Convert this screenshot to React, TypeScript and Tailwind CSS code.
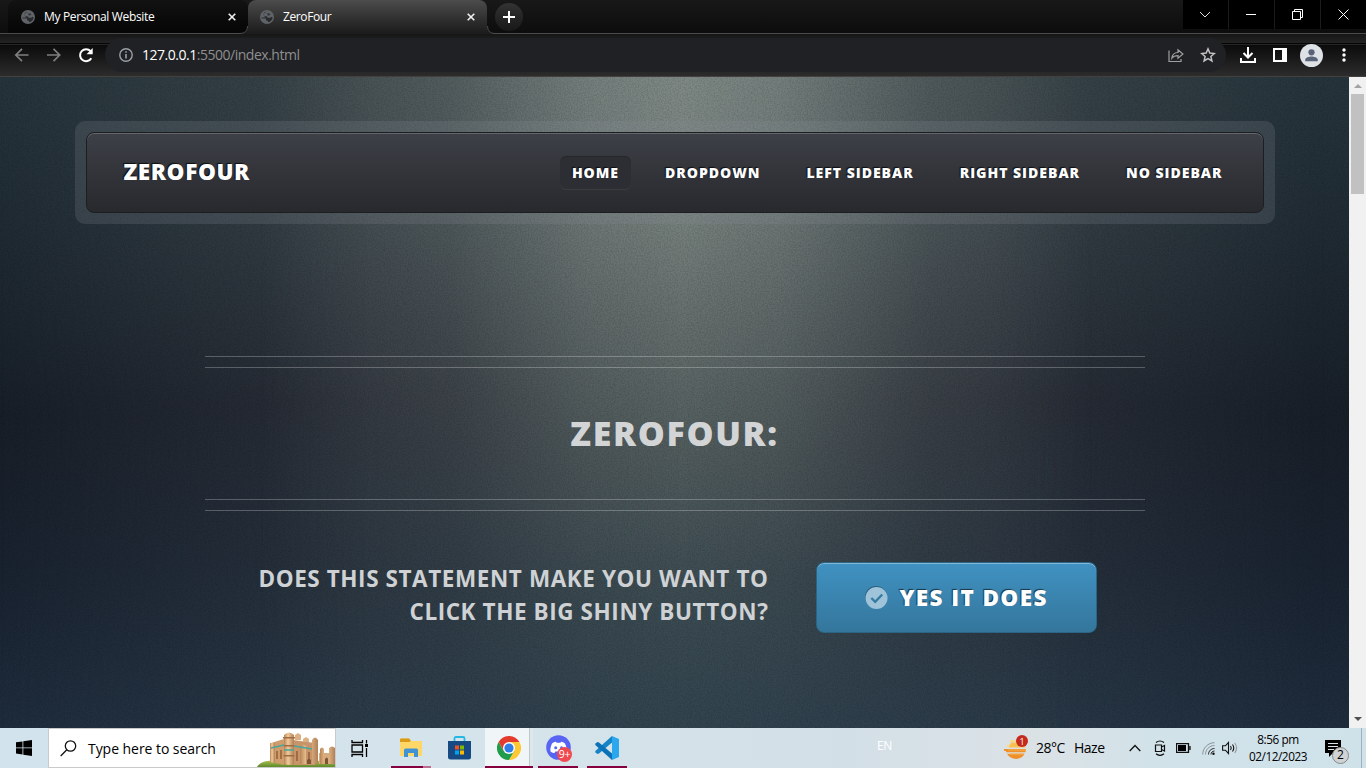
import React from "react";

const Globe = () => (
  <svg width="14" height="14" viewBox="0 0 14 14" className="shrink-0">
    <circle cx="7" cy="7" r="7" fill="#5f6368" />
    <path d="M6.600 1.400C4.500 1.800 3.400 3 3.400 4.400c0 1.300 1.100 1.700 2.600 1.800 1.200.1 1.500.6 1.600 1.600h2.200c.8 0 1.200-.4 1.700-1l1.100.6c-.3 2.300-1.900 4.300-4.300 4.900-.2-1.400-1-2-2.300-2.100V8.600H1.600L1.400 7.500h3.800c-.3-1-2-1.500-2-3.200" fill="#1b1b1b" opacity=".8" />
    <path d="M7 3.200h2.300L10.500 4.500 9.300 5.600H7.600z" fill="#1b1b1b" opacity=".6" />
  </svg>
);

const TabClose = () => (
  <svg width="8" height="8" viewBox="0 0 8 8" className="shrink-0">
    <path d="M.7.7l6.600 6.600M7.300.7L.7 7.300" stroke="#f1f1f1" strokeWidth="1.600" />
  </svg>
);

function TabStrip() {
  return (
    <div className="relative flex h-[34px] shrink-0 border-b border-[#4b4b4b] bg-gradient-to-b from-[#181818] to-[#0d0d0d]">
      <div className="ml-[8px] flex w-[240px] items-center rounded-t-lg bg-gradient-to-b from-[#121212] to-[#060606] pl-[13px]">
        <Globe />
        <span className="ml-[9px] w-[184px] whitespace-nowrap font-['Open_Sans',sans-serif] text-[12px] tracking-[-0.34px] text-white">My Personal Website</span>
        <TabClose />
      </div>
      <div className="relative -mb-px flex w-[239px] items-center rounded-t-lg bg-gradient-to-b from-[#4c4c4c] to-[#1b1b1b] pl-[12px]">
        <svg className="absolute bottom-0 -left-[8px]" width="8" height="8" viewBox="0 0 8 8">
          <path d="M0 7.500Q7.500 7.500 7.500 0H8V8H0z" fill="#1c1c1c" />
          <path d="M0 7.500Q7.500 7.500 7.500 0" fill="none" stroke="#4b4b4b" />
        </svg>
        <svg className="absolute -right-[8px] bottom-0" width="8" height="8" viewBox="0 0 8 8">
          <path d="M8 7.500Q.5 7.500 .5 0H0V8H8z" fill="#1c1c1c" />
          <path d="M8 7.500Q.5 7.500 .5 0" fill="none" stroke="#4b4b4b" />
        </svg>
        <Globe />
        <span className="ml-[9px] w-[184px] font-['Open_Sans',sans-serif] text-[12px] tracking-[-0.4px] text-white">ZeroFour</span>
        <TabClose />
      </div>
      <div className="mt-[3px] ml-[8px] flex h-[28px] w-[28px] items-center justify-center rounded-full bg-gradient-to-b from-[#333] to-[#181818]">
        <svg width="12" height="12" viewBox="0 0 12 12"><path d="M6 0v12M0 6h12" stroke="#fff" strokeWidth="2" /></svg>
      </div>
      <div className="ml-auto flex h-[29px] gap-px bg-[#1b1b1b]">
        <div className="flex w-[45px] items-center justify-center bg-black pr-px">
          <svg width="12" height="8" viewBox="0 0 12 8"><path d="M1 1l5 5 5-5" fill="none" stroke="#ddd" /></svg>
        </div>
        <div className="flex w-[45px] items-center justify-center bg-black pr-px"><div className="h-px w-[10px] bg-white" /></div>
        <div className="flex w-[45px] items-center justify-center bg-black pr-0">
          <svg width="11" height="11" viewBox="0 0 11 11" fill="none" stroke="#fff"><path d="M.5 2.500h8v8h-8zM2.500 2.500v-2h8v8h-2" /></svg>
        </div>
        <div className="flex w-[45px] items-center justify-center bg-black pr-0">
          <svg width="11" height="11" viewBox="0 0 11 11"><path d="M.5.5l10 10M10.500.5l-10 10" stroke="#fff" /></svg>
        </div>
      </div>
    </div>
  );
}

function Toolbar() {
  return (
    <div className="flex h-[43px] shrink-0 items-center border-b border-[#45403e] bg-[linear-gradient(#161616_0,#232323_9px,#050505_9px,#050505_10px,#252525_10px,#252525_11px,#0b0b0b_11px,#2c2c2c_42px)]">
      <svg className="ml-[14px]" width="16" height="16" viewBox="0 0 16 16" fill="none" stroke="#7f7f7f" strokeWidth="1.700"><path d="M14.500 8H2M8 1.800L1.800 8 8 14.200" /></svg>
      <svg className="ml-[16px]" width="16" height="16" viewBox="0 0 16 16" fill="none" stroke="#7f7f7f" strokeWidth="1.700"><path d="M1 8h12.500M7.500 1.800L13.700 8 7.500 14.200" /></svg>
      <svg className="ml-[16px]" width="16" height="16" viewBox="0 0 16 16"><path d="M13.300 11.200A6 6 0 1 1 12.600 4.200" fill="none" stroke="#fff" strokeWidth="2" /><path d="M14.700 1v6.200H8.500z" fill="#fff" /></svg>
      <div className="ml-[11px] flex h-[34px] w-[1121px] items-center rounded-full bg-[#202124] pl-[14px]">
        <svg width="14" height="14" viewBox="0 0 14 14" className="shrink-0"><circle cx="7" cy="7" r="6.200" fill="none" stroke="#9aa0a6" strokeWidth="1.400" /><path d="M7 6v4.500M7 3.300v1.500" stroke="#9aa0a6" strokeWidth="1.600" /></svg>
        <span className="ml-[9px] whitespace-nowrap pb-px font-['Open_Sans',sans-serif] text-[14px] tracking-[-0.48px] text-[#8f8f8f]"><span className="text-white">127.0.0.1</span>:5500/index.html</span>
        <svg className="mr-[16px] ml-auto shrink-0" width="16" height="16" viewBox="0 0 16 16" fill="none" stroke="#a0a0a0" strokeWidth="1.200"><path d="M1 3.500V14.500h12V12M3.800 11.200C4.200 7.500 6.200 5.600 10 5.500V2.700L14.900 7 10 11.200V8.600C7 8.600 5.200 9.300 3.800 11.200z" /></svg>
        <svg className="mr-[10px] shrink-0" width="16" height="16" viewBox="0 0 24 24" fill="none" stroke="#c4c4c4" strokeWidth="2.200"><path d="M12 2.800l2.700 6.300 6.800.6-5.200 4.500 1.600 6.700-5.900-3.600-5.900 3.600 1.600-6.700L2.500 9.700l6.800-.6z" /></svg>
      </div>
      <svg className="ml-[14px]" width="16" height="16" viewBox="0 0 16 16" fill="none" stroke="#fff" strokeWidth="2"><path d="M8 0v10M3.500 6L8 10.500 12.500 6M1 11v4h14v-4" /></svg>
      <svg className="ml-[17px]" width="14" height="14" viewBox="0 0 14 14"><path d="M0 0h14v14H0zM2 2v10h7V2z" fill="#fff" fillRule="evenodd" /></svg>
      <svg className="ml-[13px]" width="23" height="23" viewBox="0 0 22 22"><circle cx="11" cy="11" r="11" fill="#dee1e6" /><circle cx="11" cy="8" r="3" fill="#5a6478" /><path d="M5 16.500v-1.400c0-2.100 3.700-3.100 6-3.100s6 1 6 3.100v1.400z" fill="#5a6478" /></svg>
      <svg className="ml-[19px]" width="4" height="14" viewBox="0 0 4 14" fill="#fff"><circle cx="2" cy="2" r="1.700" /><circle cx="2" cy="7" r="1.700" /><circle cx="2" cy="12" r="1.700" /></svg>
    </div>
  );
}

const navText = "font-['Open_Sans',sans-serif] text-[14px] leading-[33px] font-extrabold tracking-[1px] whitespace-nowrap text-white [text-shadow:-1px_-1px_1px_rgba(0,0,0,0.75)]";

function Backdrop() {
  return (
    <>
      <div className="absolute inset-0 bg-[linear-gradient(to_bottom,#26353c_0%,#202c34_22%,#181f28_52%,#192330_75%,#1f2d3d_100%)]" />
      <div className="absolute inset-0 bg-[linear-gradient(to_bottom,#3b464a_0%,#384248_22%,#2b3039_50%,#29333e_75%,#2a3a48_100%)] [mask-image:linear-gradient(to_right,transparent,black_27%,black_73%,transparent_97%)]" />
      <div className="absolute inset-0 bg-[linear-gradient(to_bottom,#7f8a86_0%,#78827e_20%,#656f6d_38%,#515c5d_58%,#3e4d53_78%,#32444f_100%)] [mask-image:linear-gradient(to_right,transparent_19%,rgba(0,0,0,0.35)_33%,rgba(0,0,0,0.85)_43%,black_50%,rgba(0,0,0,0.85)_57%,rgba(0,0,0,0.3)_68%,transparent_80%)]" />
      <svg className="absolute inset-0 h-full w-full opacity-[0.1]">
        <filter id="grain">
          <feTurbulence type="fractalNoise" baseFrequency="0.7" numOctaves="2" seed="4" />
          <feColorMatrix values="0 0 0 0 0  0 0 0 0 0  0 0 0 0 0  3 0 0 0 -1.100" />
        </filter>
        <rect width="100%" height="100%" filter="url(#grain)" />
      </svg>
    </>
  );
}

const Rule = () => <div className="h-[12px] w-[940px] border-y border-[#ffffff40]" />;

function Page() {
  return (
    <div className="relative flex flex-1 overflow-hidden">
      <Backdrop />
      <div className="relative flex flex-1 flex-col items-center pt-[44px]">
        <div className="h-[103px] w-[1200px] rounded-[10px] bg-[#8b8f9734] p-[11px]">
          <div className="flex h-[81px] items-center rounded-lg border border-[#1d1e21] bg-gradient-to-b from-[#3d4047] to-[#28292d] pr-[28px] pl-[37px] shadow-[inset_0_1px_0_rgba(255,255,255,0.2)]">
            <span className="pb-px font-['Open_Sans',sans-serif] text-[22.500px] font-extrabold tracking-[0.6px] whitespace-nowrap text-white [text-shadow:-1px_-1px_1px_rgba(0,0,0,0.75)]">ZEROFOUR</span>
            <nav className="ml-auto flex gap-[22px]">
              <span className={navText + " rounded-md bg-[#2d2e33] px-[12px] shadow-[inset_0_1px_0_rgba(0,0,0,0.15),0_1px_0_rgba(255,255,255,0.06)]"}>HOME</span>
              <span className={navText + " px-[12px]"}>DROPDOWN</span>
              <span className={navText + " px-[12px]"}>LEFT SIDEBAR</span>
              <span className={navText + " px-[12px]"}>RIGHT SIDEBAR</span>
              <span className={navText + " px-[12px]"}>NO SIDEBAR</span>
            </nav>
          </div>
        </div>
        <div className="mt-[132px]"><Rule /></div>
        <h1 className="flex h-[131px] items-center font-['Open_Sans',sans-serif] text-[34px] font-extrabold tracking-[1.650px] whitespace-nowrap text-[#d2d4d5]">ZEROFOUR:</h1>
        <Rule />
        <div className="mt-[51px] flex w-[940px]">
          <p className="w-[564px] text-right font-['Open_Sans',sans-serif] text-[22.500px] leading-[33px] font-bold tracking-[0.580px] text-[#cfd2d4]">
            DOES THIS STATEMENT MAKE YOU WANT TO<br />CLICK THE BIG SHINY BUTTON?
          </p>
          <div className="ml-[47px] flex h-[71px] w-[281px] items-center rounded-lg border border-[#2c6484] bg-gradient-to-b from-[#4092c2] to-[#34769c] pl-[48px] shadow-[inset_0_1px_0_rgba(255,255,255,0.35)]">
            <svg width="23" height="23" viewBox="0 0 23 23" className="shrink-0"><circle cx="11" cy="11" r="11" fill="#28607f" /><circle cx="11.500" cy="12" r="11" fill="#9fc4d9" /><path d="M6.300 12l3.900 3.900 7-7.400" fill="none" stroke="#377ba2" strokeWidth="2.400" /></svg>
            <span className="ml-[12px] font-['Open_Sans',sans-serif] text-[22.500px] font-extrabold tracking-[1.400px] whitespace-nowrap text-white [text-shadow:-1px_-1px_1px_rgba(0,0,0,0.6)]">YES IT DOES</span>
          </div>
        </div>
      </div>
      <div className="relative flex w-[17px] flex-col items-center justify-between bg-[#f1f1f1] py-[7px]">
        <svg width="8" height="4" viewBox="0 0 8 4"><path d="M0 4l4-4 4 4z" fill="#a3a3a3" /></svg>
        <div className="mt-[6px] mb-auto h-[100px] w-[13px] bg-[#c1c1c1]" />
        <svg width="8" height="4" viewBox="0 0 8 4"><path d="M0 0l4 4 4-4z" fill="#505050" /></svg>
      </div>
    </div>
  );
}

const Castle = () => (
  <svg width="78" height="36" viewBox="0 0 78 36">
    <defs>
      <linearGradient id="stone" x1="0" x2="1"><stop offset="0" stopColor="#b98457" /><stop offset=".4" stopColor="#efcb9b" /><stop offset="1" stopColor="#b27e55" /></linearGradient>
      <linearGradient id="hill" x1="0" y1="0" x2="0" y2="1"><stop offset="0" stopColor="#a9bf52" /><stop offset="1" stopColor="#5f8a2b" /></linearGradient>
    </defs>
    <path d="M0 36C4 29 15 29 24 30s38-1 54 0v6z" fill="url(#hill)" />
    <path d="M14 12l13-4v26l-13-3z" fill="#cf9c6c" />
    <path d="M36 9l22 3v22H36z" fill="#c8956a" />
    <path d="M38 9V4l3-2 3 2v5zM46 11V8l3-2 3 2v3z" fill="#deb081" />
    <path d="M13 12h5v20l-5-1z" fill="url(#stone)" />
    <path d="M27 4q5-5 10 0v29q-5 2-10 0z" fill="url(#stone)" />
    <path d="M26 6h12v1.500H26zM26.500 14h11v1.500h-11zM26.500 24h11v1.500h-11z" fill="#a06c45" />
    <path d="M43 15q3-3 6 0v18h-6zM55 9q3-5 6 0v24h-6z" fill="url(#stone)" />
    <path d="M62 22h16v11H62z" fill="#d8ab7d" />
    <path d="M63 18q2-3 4 0v15h-4zM72 17q3-3 6 0v16h-6z" fill="url(#stone)" />
    <path d="M14 17l13-3M37 15l18 3M27 19h10" stroke="#48a79c" strokeWidth="1.300" fill="none" />
    <path d="M20 20v8M24 19v9M40 20v10M52 21v9" stroke="#95623d" strokeWidth="1.600" />
    <path d="M68 33v-5q2-3 3 0v5zM50 33v-4q2-2 4 0v4z" fill="#7f5334" />
  </svg>
);

const segoe = "font-['Open_Sans',sans-serif] whitespace-nowrap text-black";

function Taskbar() {
  return (
    <div className="flex h-[40px] shrink-0 items-center bg-[linear-gradient(to_right,#d3e3ed,#d5e4eb_35%,#d3dfe7_62%,#dbe2e6_76%,#d1e2e9_85%,#cfe2ea)]">
      <svg className="ml-[16px]" width="16" height="16" viewBox="0 0 16 16"><path d="M0 2.300l6.500-.9v6.100H0zM7.300 1.300L16 0v7.500H7.300zM0 8.300h6.500v6.200L0 13.600zM7.300 8.300H16V16l-8.700-1.300z" /></svg>
      <div className="ml-[16px] flex h-[40px] w-[288px] items-center border border-[#c8cacc] bg-white pl-[11px]">
        <svg width="17" height="17" viewBox="0 0 17 17" fill="none" stroke="#111" strokeWidth="1.300" className="shrink-0"><circle cx="10.500" cy="6" r="5.200" /><path d="M6.800 9.800L.7 16" /></svg>
        <span className={segoe + " ml-[11px] text-[14px] tracking-[-0.05px] text-[#222]"}>Type here to search</span>
        <div className="mt-[2px] ml-auto"><Castle /></div>
      </div>
      <svg className="ml-[15px]" width="18" height="17" viewBox="0 0 18 17" fill="none" stroke="#000" strokeWidth="1.300"><path d="M1 0v2.500h10.500V0M1 17v-2.500h10.500V17M1 5h10.500v7H1zM15.500 0v3.500M15.500 8v9" /><path d="M14 4h3v3h-3z" fill="#000" stroke="none" /></svg>
      <div className="relative ml-[22px] flex h-[40px] w-[40px] items-center justify-center">
        <svg width="22" height="20" viewBox="0 0 22 20"><path d="M0 2c0-1 .5-1.500 1.500-1.500H9L11 3h9.500c1 0 1.500.5 1.500 1.500V18H0z" fill="#fbc84e" /><path d="M0 1.500Q0 .5 1.500.5H9L11 3 9.500 4H0z" fill="#d99a17" /><path d="M0 4h9.500l1.500-1h9.500Q22 3 22 4.500V18H0z" fill="#ffd768" /><path d="M4 19v-7q0-1.500 1.500-1.500h11Q18 10.500 18 12v7h-4v-4H8v4z" fill="#3f93d4" /></svg>
        <div className="absolute bottom-0 left-0 flex h-[2px] w-[40px] bg-[#bd6d90]"><div className="w-[32px] bg-[#86003f]" /></div>
      </div>
      <svg className="ml-[17px]" width="23" height="24" viewBox="0 0 23 24"><path d="M6.500 6V2.500Q6.500 1 8 1h7q1.500 0 1.500 1.500V6" fill="none" stroke="#26b8e4" strokeWidth="1.800" /><path d="M0 5h23v16q0 2.500-2.500 2.500h-18Q0 23.500 0 21z" fill="#174a83" /><path d="M7 9.500h4v4H7z" fill="#f25022" /><path d="M12 9.500h4v4h-4z" fill="#7fba00" /><path d="M7 14.500h4v4H7z" fill="#00a4ef" /><path d="M12 14.500h4v4h-4z" fill="#ffb900" /></svg>
      <div className="relative ml-[14px] flex h-[40px] w-[48px] items-center justify-center border-r-[3px] border-[#dfe7eb] bg-[#f0f5f8] pl-[2px]">
        <svg width="24" height="24" viewBox="0 0 24 24"><circle cx="12" cy="12" r="12" fill="#fff" /><path d="M12 6h10.400A12 12 0 0 1 12 24l5.200-9z" fill="#fcc934" /><path d="M1.600 6A12 12 0 0 0 12 24l5.200-9L12 12 6.800 15z" fill="#219b4c" /><path d="M1.600 6A12 12 0 0 1 22.400 6H12L6.800 15z" fill="#e33b2e" /><circle cx="12" cy="12" r="6" fill="#fff" /><circle cx="12" cy="12" r="4.600" fill="#2f7de9" /></svg>
        <div className="absolute bottom-0 left-0 h-[2px] w-[48px] bg-[#86003f]" />
        <div className="absolute top-0 right-0 h-[38px] w-px bg-[#bcc8ce]" />
      </div>
      <div className="relative ml-[5px] flex h-[40px] w-[40px] items-center justify-center pl-[2px]">
        <svg width="26" height="26" viewBox="0 0 26 26"><circle cx="12.500" cy="12.500" r="12.300" fill="#5865f2" /><path d="M6 8.500c2-1.500 3.500-1.700 4-1.700l.5 1h4l.5-1c.5 0 2 .2 4 1.700 1.500 3 2 5.500 1.500 8-1.500 1.200-3 1.500-4 1.500l-.8-1.500h-6.400L8.500 18c-1 0-2.500-.3-4-1.500-.4-2.500.1-5 1.500-8z" fill="#fff" /><circle cx="9.700" cy="12.800" r="1.500" fill="#5865f2" /><circle cx="15.500" cy="12.800" r="1.500" fill="#5865f2" /></svg>
        <div className="absolute top-[19px] left-[19px] flex h-[15px] w-[15px] items-center justify-center rounded-full bg-[#f04a50] pb-px font-['Open_Sans',sans-serif] text-[10.500px] leading-none tracking-[-0.3px] text-white">9+</div>
        <div className="absolute bottom-0 left-0 h-[2px] w-[40px] bg-[#86003f]" />
      </div>
      <div className="relative ml-[9px] flex h-[40px] w-[40px] items-center justify-center">
        <svg width="24" height="24" viewBox="0 0 24 24"><path d="M17 0l7 3v18l-7 3z" fill="#2ba7ee" /><path d="M17 0v6.500L4 17.500 2.700 18 .3 16.500V15z" fill="#1583c8" /><path d="M17 24v-6.500L4 6.500 2.700 6 .3 7.500V9z" fill="#0c72b8" /></svg>
        <div className="absolute bottom-0 left-0 h-[2px] w-[40px] bg-[#86003f]" />
      </div>
      <span className="ml-[250px] w-[16px] pb-[5px] font-['Open_Sans',sans-serif] text-[12px] tracking-[-0.3px] text-white">EN</span>
      <div className="relative ml-[111px]">
        <svg width="24" height="24" viewBox="0 0 24 24"><path d="M6 4h12v2H6zM3 8.500h17v2.500H3z" fill="#fbd88a" /><path d="M0 13h22c0 1.200-.2 2.200-.6 3.300H2V15H0zM3 17.800h17.600C19 21 16 23 12 23c-4 0-7-2-9-5.200z" fill="#f0902a" /><path d="M7 6.500h13l1.500 5H5z" fill="#fbc050" /><path d="M4 14h18M6 18h14" stroke="#f7b04c" /></svg>
        <div className="absolute -top-px left-[12px] flex h-[12px] w-[12px] items-center justify-center rounded-full bg-[#c42b1c] font-['Open_Sans',sans-serif] text-[9px] leading-none text-white">1</div>
      </div>
      <span className={segoe + " ml-[8px] w-[38px] pb-px text-[14px] tracking-[-0.5px]"}>28°C</span>
      <span className={segoe + " w-[55px] pb-px text-[14px] tracking-[-0.5px]"}>Haze</span>
      <svg width="12" height="8" viewBox="0 0 12 8" fill="none" stroke="#111" strokeWidth="1.300"><path d="M.7 7L6 1.500 11.300 7" /></svg>
      <svg className="ml-[13px]" width="12" height="16" viewBox="0 0 12 16" fill="none" stroke="#111" strokeWidth="1.200"><path d="M1.500 5h6v6.500h-6zM7.500 7l3-1.500v5.500l-3-1.500M2 2.500Q6-.5 10 2.500M2 13.800Q6 17 10 13.800" /></svg>
      <svg className="ml-[10px]" width="15" height="10" viewBox="0 0 15 10"><path d="M.5.500h12v9H.5zM14 3v4" fill="none" stroke="#111" strokeWidth="1.300" /><path d="M2 2h8v6H2z" /></svg>
      <svg className="ml-[11px]" width="13" height="13" viewBox="0 0 13 13" fill="none" stroke="#555"><path d="M.7 12.500C.7 6 6 .7 12.500.7M3.500 12.500c0-5 4-9 9-9" stroke="#8a9399" /><path d="M6.500 12.500c0-3.400 2.600-6 6-6M9 12.500c0-2 1.500-3.500 3.500-3.500" stroke="#222" /><circle cx="11.500" cy="11.700" r="1.200" fill="#111" stroke="none" /></svg>
      <svg className="ml-[7px]" width="16" height="14" viewBox="0 0 16 14" fill="none" stroke="#111" strokeWidth="1.100"><path d="M.6 4.800h2.800L6.500 1.500v11L3.400 9.200H.6zM8.500 5q1.500 2 0 4M10.500 3.500q2.500 3.500 0 7" /><path d="M12.800 2q3.500 5 0 10" stroke="#999" /></svg>
      <div className={segoe + " ml-[9px] w-[62px] pb-px text-center text-[11.800px] leading-[17px] tracking-[-0.45px]"}>8:56 pm<br />02/12/2023</div>
      <div className="relative ml-[16px]">
        <svg width="17" height="17" viewBox="0 0 17 17"><path d="M0 0h16v13H8l-4 4v-4H0z" /><path d="M3 3.500h10M3 6.500h10M3 9.500h6" stroke="#d5e4eb" /></svg>
        <div className="absolute top-[7px] left-[7px] flex h-[17px] w-[17px] items-center justify-center rounded-full border border-[#888] bg-[#cfd3d5] font-['Open_Sans',sans-serif] text-[12px] leading-none text-black">2</div>
      </div>
      <div className="ml-auto h-[40px] w-[5px] border-l border-[#9fb0b8]" />
    </div>
  );
}

export default function App() {
  return (
    <div className="flex h-[768px] w-[1366px] flex-col overflow-hidden bg-black">
      <TabStrip />
      <Toolbar />
      <Page />
      <Taskbar />
    </div>
  );
}
